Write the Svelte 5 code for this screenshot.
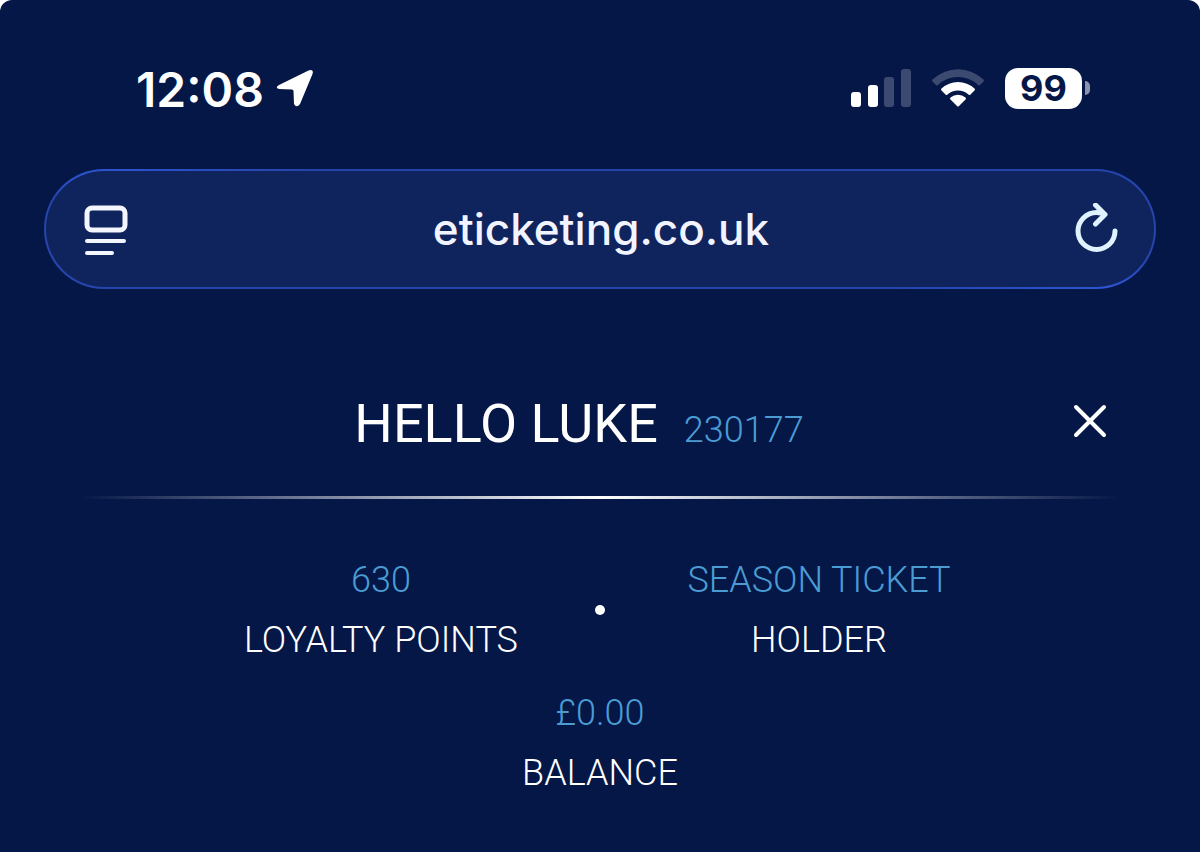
<script lang="ts">
    let address = "eticketing.co.uk";
    let menuOpen = true;

    const member = {
        name: "Luke",
        id: "230177",
        points: 630,
        ticket: "Season ticket",
        balance: "£0.00"
    };

    function close() {
        menuOpen = false;
    }
</script>

<div class="screen">
    <header class="status_bar">
        <div class="status_group">
            <time class="clock">12:08</time>
            <svg viewBox="0 0 38 38" width="38" height="38" aria-hidden="true">
                <path d="M3 16 32.500 1.500 Q38 -0.500 36.500 5 L24 35 Q20.500 39.500 18 35 L17.500 22 Q17.500 20.500 16 20.500 L3 20 Q-1.500 18.500 3 16Z" fill="#fff" />
            </svg>
        </div>
        <div class="status_group right">
            <svg viewBox="0 0 60 38" width="60" height="38" aria-hidden="true">
                <rect x="0" y="23" width="10" height="15" rx="3" fill="#fff" />
                <rect x="17" y="16" width="10" height="22" rx="3" fill="#fff" />
                <rect x="33" y="8" width="10" height="30" rx="3" fill="#3c4970" />
                <rect x="50" y="0" width="10" height="38" rx="3" fill="#3c4970" />
            </svg>
            <svg viewBox="0 0 54 38" width="54" height="38" aria-hidden="true">
                <path d="M1.500 10.500 Q0.500 11.500 1.500 12.500 L5 16 Q6 17 7 16 A29 29 0 0 1 47 16 Q48 17 49 16 L52.500 12.500 Q53.500 11.500 52.500 10.500 A37 37 0 0 0 1.500 10.500Z" fill="#3c4970" />
                <path d="M10.500 19.500 Q9.500 20.500 10.500 21.500 L14.500 25.500 Q15.500 26.500 16.500 25.500 A16 16 0 0 1 37.500 25.500 Q38.500 26.500 39.500 25.500 L43.500 21.500 Q44.500 20.500 43.500 19.500 A24.500 24.500 0 0 0 10.500 19.500Z" fill="#fff" />
                <path d="M19.500 28.500 Q18.500 29.500 19.500 30.500 L26 37 Q27 38 28 37 L34.500 30.500 Q35.500 29.500 34.500 28.500 A11.500 11.500 0 0 0 19.500 28.500Z" fill="#fff" />
            </svg>
            <div class="battery">
                <span class="battery_level">99</span>
                <span class="battery_tip"></span>
            </div>
        </div>
    </header>

    <form class="address_bar">
        <button type="button" aria-label="Page menu">
            <svg viewBox="0 0 44 52" width="44" height="52" fill="none" stroke="#f4f6ff" stroke-width="4" stroke-linecap="round">
                <rect x="3" y="5" width="38" height="22" rx="5" stroke-width="5" />
                <path d="M3 38H40M3 50H28" />
            </svg>
        </button>
        <input class="address" type="text" aria-label="Address" bind:value={address} />
        <button type="button" aria-label="Reload">
            <svg viewBox="0 0 44 52" width="44" height="52" fill="none" stroke="#dff3ff" stroke-width="5" stroke-linecap="round" stroke-linejoin="round">
                <path d="M41 28A18.500 18.500 0 1 1 22.500 9.500Q27 9.500 31 11.500M21.500 2 31 11.500 21.500 21" />
            </svg>
        </button>
    </form>

    {#if menuOpen}
        <main class="account">
            <div class="greeting">
                <h1>Hello {member.name}</h1>
                <span class="accent">{member.id}</span>
                <button class="close" type="button" aria-label="Close" on:click={close}>
                    <svg viewBox="0 0 36 36" width="36" height="36" fill="none" stroke="#fff" stroke-width="4" stroke-linecap="round">
                        <path d="M4 4 32 32M32 4 4 32" />
                    </svg>
                </button>
            </div>
            <div class="divider"></div>
            <div class="stats">
                <p><span class="accent">{member.points}</span><span>Loyalty points</span></p>
                <i class="dot"></i>
                <p><span class="accent">{member.ticket}</span><span>Holder</span></p>
            </div>
            <div class="stats">
                <p><span class="accent">{member.balance}</span><span>Balance</span></p>
            </div>
        </main>
    {/if}
</div>

<style>
    :global(body) {
        background: #fff;
    }

    .screen {
        box-sizing: border-box;
        min-height: 100vh;
        padding: 56px 44px 48px;
        border-radius: 12px 12px 0 0;
        background: #051747;
        color: #fff;
        font-family: Inter, sans-serif;
    }

    .status_bar {
        display: flex;
        justify-content: space-between;
        align-items: center;
        height: 64px;
        padding: 0 66px 0 92px;
    }

    .status_group {
        display: flex;
        align-items: center;
        gap: 12px;
    }

    .status_group.right {
        gap: 20px;
    }

    .clock {
        padding-top: 3px;
        font-size: 48px;
        font-weight: 600;
        line-height: 60px;
    }

    .battery {
        display: flex;
        align-items: center;
        gap: 3px;
    }

    .battery_level {
        width: 77px;
        border-radius: 13px;
        background: #fff;
        color: #051747;
        font-size: 36px;
        font-weight: 700;
        line-height: 41px;
        text-align: center;
    }

    .battery_tip {
        width: 5px;
        height: 14px;
        border-radius: 0 5px 5px 0;
        background: #8c94ad;
    }

    .address_bar {
        display: flex;
        align-items: center;
        justify-content: space-between;
        box-sizing: border-box;
        height: 120px;
        margin-top: 49px;
        padding: 0 36px 0 38px;
        border: 2px solid transparent;
        border-radius: 60px;
        background:
            linear-gradient(#0f235d, #0f235d) padding-box,
            linear-gradient(to bottom right, #3158dc, #2545ad 12%, #2545ad 88%, #3158dc) border-box;
    }

    .address {
        flex: 1;
        min-width: 0;
        padding: 0;
        border: none;
        outline: none;
        background: none;
        color: #f1f4ff;
        font-family: inherit;
        font-size: 44px;
        font-weight: 500;
        line-height: 60px;
        text-align: center;
    }

    button {
        display: flex;
        padding: 0;
        border: none;
        background: none;
        cursor: pointer;
    }

    .account {
        padding: 94px 36px 0;
        font-family: Roboto, sans-serif;
        font-size: 36px;
        font-weight: 300;
        line-height: 60px;
        text-transform: uppercase;
    }

    .greeting {
        display: flex;
        position: relative;
        justify-content: center;
        align-items: baseline;
        gap: 26px;
        padding-right: 42px;
    }

    h1 {
        margin: 0;
        font-size: 54px;
        font-weight: 400;
        line-height: 82px;
    }

    .accent {
        color: #4b9cd3;
    }

    .close {
        position: absolute;
        top: 20px;
        right: 12px;
    }

    .divider {
        height: 3px;
        margin: 31px 0 51px;
        background: linear-gradient(to right, transparent, #fff 50%, transparent);
    }

    .stats {
        display: flex;
        justify-content: center;
        align-items: center;
        gap: 76px;
        margin-bottom: 13px;
    }

    .stats p {
        display: flex;
        flex-direction: column;
        align-items: center;
        min-width: 276px;
        margin: 0;
    }

    .dot {
        width: 10px;
        height: 10px;
        border-radius: 50%;
        background: #fff;
    }
</style>
